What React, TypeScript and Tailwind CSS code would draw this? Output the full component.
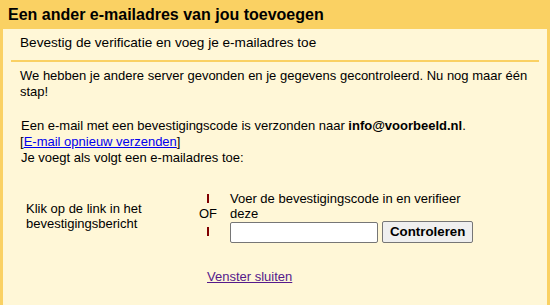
export default function App() {
  return (
    <div className="w-[550px] h-[305px] bg-[#fad163] flex flex-col font-['Liberation_Sans',Arial,sans-serif] text-[13px] text-black overflow-hidden">
      {/* Title */}
      <div className="h-[29px] pl-[8px] flex items-center text-[16px] font-bold">
        Een ander e-mailadres van jou toevoegen
      </div>

      {/* Panel */}
      <div className="mx-[3px] flex-1 bg-[#fff7d7]">
        <div className="mx-[8px] h-[33px] border-b-2 border-[#fad163] pl-[9px] pb-[2px] flex items-center text-[13.6px]">
          Bevestig de verificatie en voeg je e-mailadres toe
        </div>

        <div className="pl-[17px] pr-[12px] pt-[6px] leading-[16px]">
          We hebben je andere server gevonden en je gegevens gecontroleerd. Nu nog maar één stap!
        </div>

        <div className="pl-[18px] pt-[18px] leading-[16px]">
          <div>
            Een e-mail met een bevestigingscode is verzonden naar <b>info@voorbeeld.nl</b>.
          </div>
          <div className="-ml-[1px]">
            [<a href="#" className="text-[#0000ee] underline">E-mail opnieuw verzenden</a>]
          </div>
          <div>Je voegt als volgt een e-mailadres toe:</div>
        </div>

        {/* Options */}
        <div className="flex items-start pt-[25px] leading-[15px]">
          <div className="w-[183px] pl-[23px] mt-[10px]">
            Klik op de link in het bevestigingsbericht
          </div>
          <div className="w-[44px] mt-[3px] flex flex-col items-center">
            <div className="w-[2px] h-[9px] bg-[#800000]" />
            <div className="mt-[3px] leading-[15px]">OF</div>
            <div className="w-[2px] h-[9px] mt-[6px] bg-[#800000]" />
          </div>
          <div className="flex flex-col">
            <div className="w-[240px] leading-[15px]">
              Voer de bevestigingscode in en verifieer deze
            </div>
            <div className="flex items-center gap-[4px]">
              <input
                type="text"
                className="w-[148px] h-[21px] bg-white border border-[#767676] rounded-[2px] outline-none"
              />
              <button className="h-[22px] px-[7px] bg-[#efefef] border border-[#767676] rounded-[2px] text-[13.3px] font-bold leading-none">
                Controleren
              </button>
            </div>
          </div>
        </div>

        <div className="pl-[204px] pt-[26px] leading-[15px]">
          <a href="#" className="text-[#551a8b] underline">
            Venster sluiten
          </a>
        </div>
      </div>
    </div>
  )
}
